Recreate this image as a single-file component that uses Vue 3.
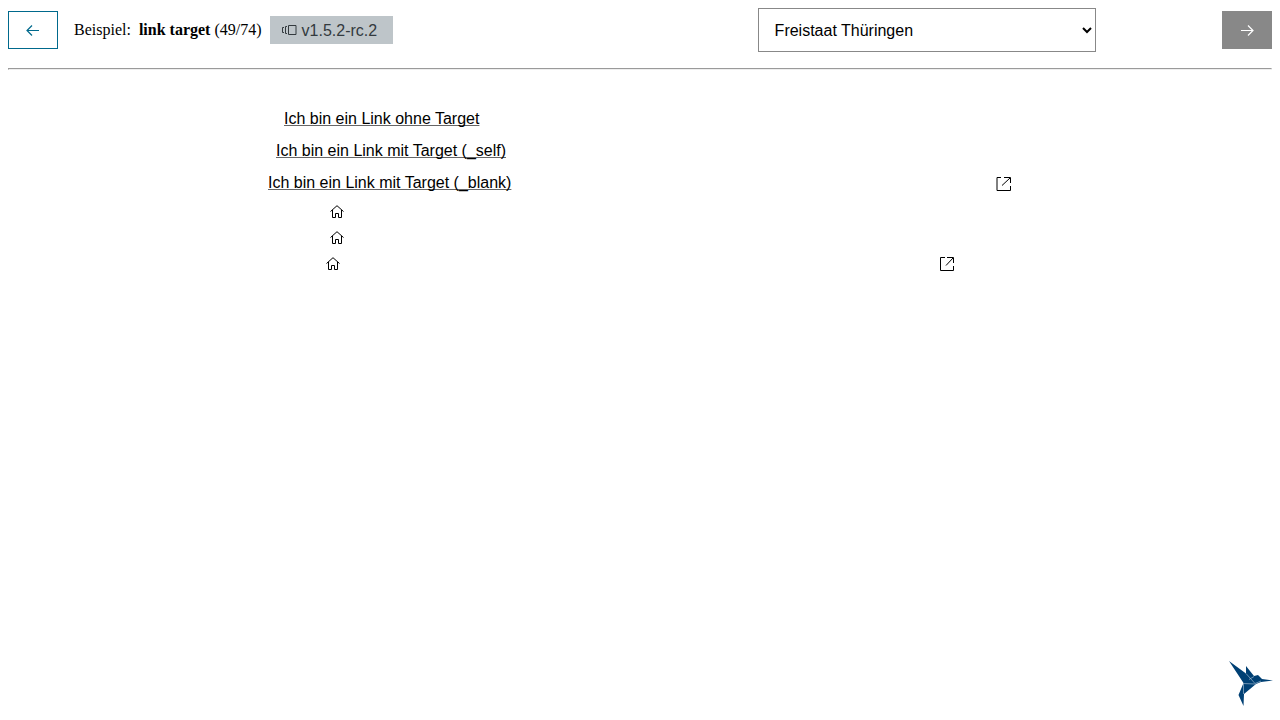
<script setup>
import { ref } from 'vue'

const theme = ref('th')
const textLinks = [
  { label: 'Ich bin ein Link ohne Target', size: 'small' },
  { label: 'Ich bin ein Link mit Target (_self)', target: '_self', size: 'medium' },
  { label: 'Ich bin ein Link mit Target (_blank)', target: '_blank', size: 'large' },
]
const iconLinks = [
  { label: 'Startseite' },
  { label: 'Startseite', target: '_self' },
  { label: 'Startseite', target: '_blank' },
]
</script>

<template>
  <div class="page">
    <header class="toolbar">
      <button class="nav prev" type="button" aria-label="Zurück">
        <svg width="14" height="12" viewBox="0 0 14 12"><path d="M13 6.5H1.5M6 1.5l-5 5 5 5" /></svg>
      </button>
      <span class="title">Beispiel: <strong>link target</strong> (49/74)</span>
      <span class="badge">
        <svg width="15" height="10" viewBox="0 0 15 10"><path d="M6.500.5h7.500v9H6.500zM5 1.500H3.500v7H5M2 2.500H.5v5H2" /></svg>
        <span>v1.5.2-rc.2</span>
      </span>
      <select v-model="theme" class="theme" aria-label="Theme">
        <option value="th">Freistaat Thüringen</option>
      </select>
      <button class="nav next" type="button" aria-label="Weiter">
        <svg width="14" height="12" viewBox="0 0 14 12"><path d="M1 6.5h11.500M8 1.500l5 5-5 5" /></svg>
      </button>
    </header>
    <hr />
    <main>
      <a v-for="link in textLinks" :key="link.label" class="link text-link" :class="link.size" href="#" :target="link.target">
        <span class="label">{{ link.label }}</span>
        <svg v-if="link.target === '_blank'" class="external" width="16" height="14" viewBox="0 0 16 14">
          <path d="M5 .5H1v13h13.500V9M8 .5h6.500V6M14 1L6 8.500" />
        </svg>
      </a>
      <a
        v-for="(link, index) in iconLinks"
        :key="index"
        class="link icon-link"
        :class="{ wide: link.target === '_blank' }"
        href="#"
        :target="link.target"
        :aria-label="link.label"
      >
        <svg class="home" width="14" height="13" viewBox="0 0 14 13">
          <path d="M.5 6.500L7 .7l6.500 5.800M2.500 5v7.500h3v-4h3v4h3V5" />
        </svg>
        <svg v-if="link.target === '_blank'" class="external" width="14" height="16" viewBox="0 0 14 16">
          <path d="M5 2.500H.5v13h13V11M7 2.500h6.500V8M13 3L6 10.500" />
        </svg>
      </a>
    </main>
    <svg class="logo" width="44" height="45" viewBox="0 0 44 45" aria-hidden="true">
      <path class="bird" d="M0 0L17 12.500 17 5l8 10 4-1 4 4 11 1.500-12 1.500-5 2-12 10-.5 12-5-11 5-12z" />
      <path class="facets" d="M14 22.500l12 .5M17 12.500l9 10M25 15.500l-5 3M14.500 23v10M26 22.500l6-2.500" />
    </svg>
  </div>
</template>

<style>
body {
  margin: 0;
  background: #fff;
}
</style>

<style scoped>
.page {
  padding: 8px;
  color: #000;
  font: 16px/20px "Liberation Serif", "Times New Roman", serif;
}
svg {
  fill: none;
  stroke: currentColor;
  stroke-width: 1;
  flex: none;
}
.toolbar {
  display: flex;
  align-items: center;
}
.nav {
  display: flex;
  align-items: center;
  justify-content: center;
  box-sizing: border-box;
  width: 50px;
  height: 38px;
  padding: 0;
  border: 1px solid #00698c;
  background: #fff;
  color: #00698c;
}
.nav svg {
  stroke-width: 1.2;
}
.next {
  border-color: #888;
  background: #888;
  color: #fff;
}
.title {
  margin: 0 8px 0 16px;
}
.title strong {
  margin-left: 4px;
}
.badge {
  display: flex;
  align-items: center;
  gap: 5px;
  box-sizing: border-box;
  height: 28px;
  padding: 0 16px 0 12px;
  background: #bec5c9;
  color: #333a3e;
  font-family: "Liberation Sans", Arial, sans-serif;
}
.badge span {
  padding-top: 2px;
}
.theme {
  box-sizing: border-box;
  width: 338px;
  height: 44px;
  margin: 0 10% 0 auto;
  padding: 0 0 0 12px;
  border: 1px solid #888;
  border-radius: 0;
  background: #fff;
  color: #000;
  font: 16px "Liberation Sans", Arial, sans-serif;
}
hr {
  margin: 16px 0 32px;
}
.link {
  display: flex;
  align-items: center;
  justify-content: space-between;
  box-sizing: border-box;
  margin: 0 auto;
  color: #000;
  font-family: "Liberation Sans", Arial, sans-serif;
  text-decoration: none;
}
.text-link {
  height: 32px;
  padding-top: 2px;
}
.text-link .external {
  margin-top: 2px;
}
.label {
  text-decoration: underline 1px #666;
  text-underline-offset: 1px;
  text-decoration-skip-ink: none;
}
.small {
  max-width: 712px;
}
.medium {
  max-width: 728px;
}
.large {
  max-width: 744px;
}
.icon-link {
  max-width: 620px;
  height: 26px;
}
.wide {
  max-width: 628px;
}
.logo {
  position: fixed;
  right: 7px;
  bottom: 14px;
}
.bird {
  fill: #004074;
  stroke: none;
}
.facets {
  stroke: #b5cadb;
  stroke-width: 0.6;
}
</style>
